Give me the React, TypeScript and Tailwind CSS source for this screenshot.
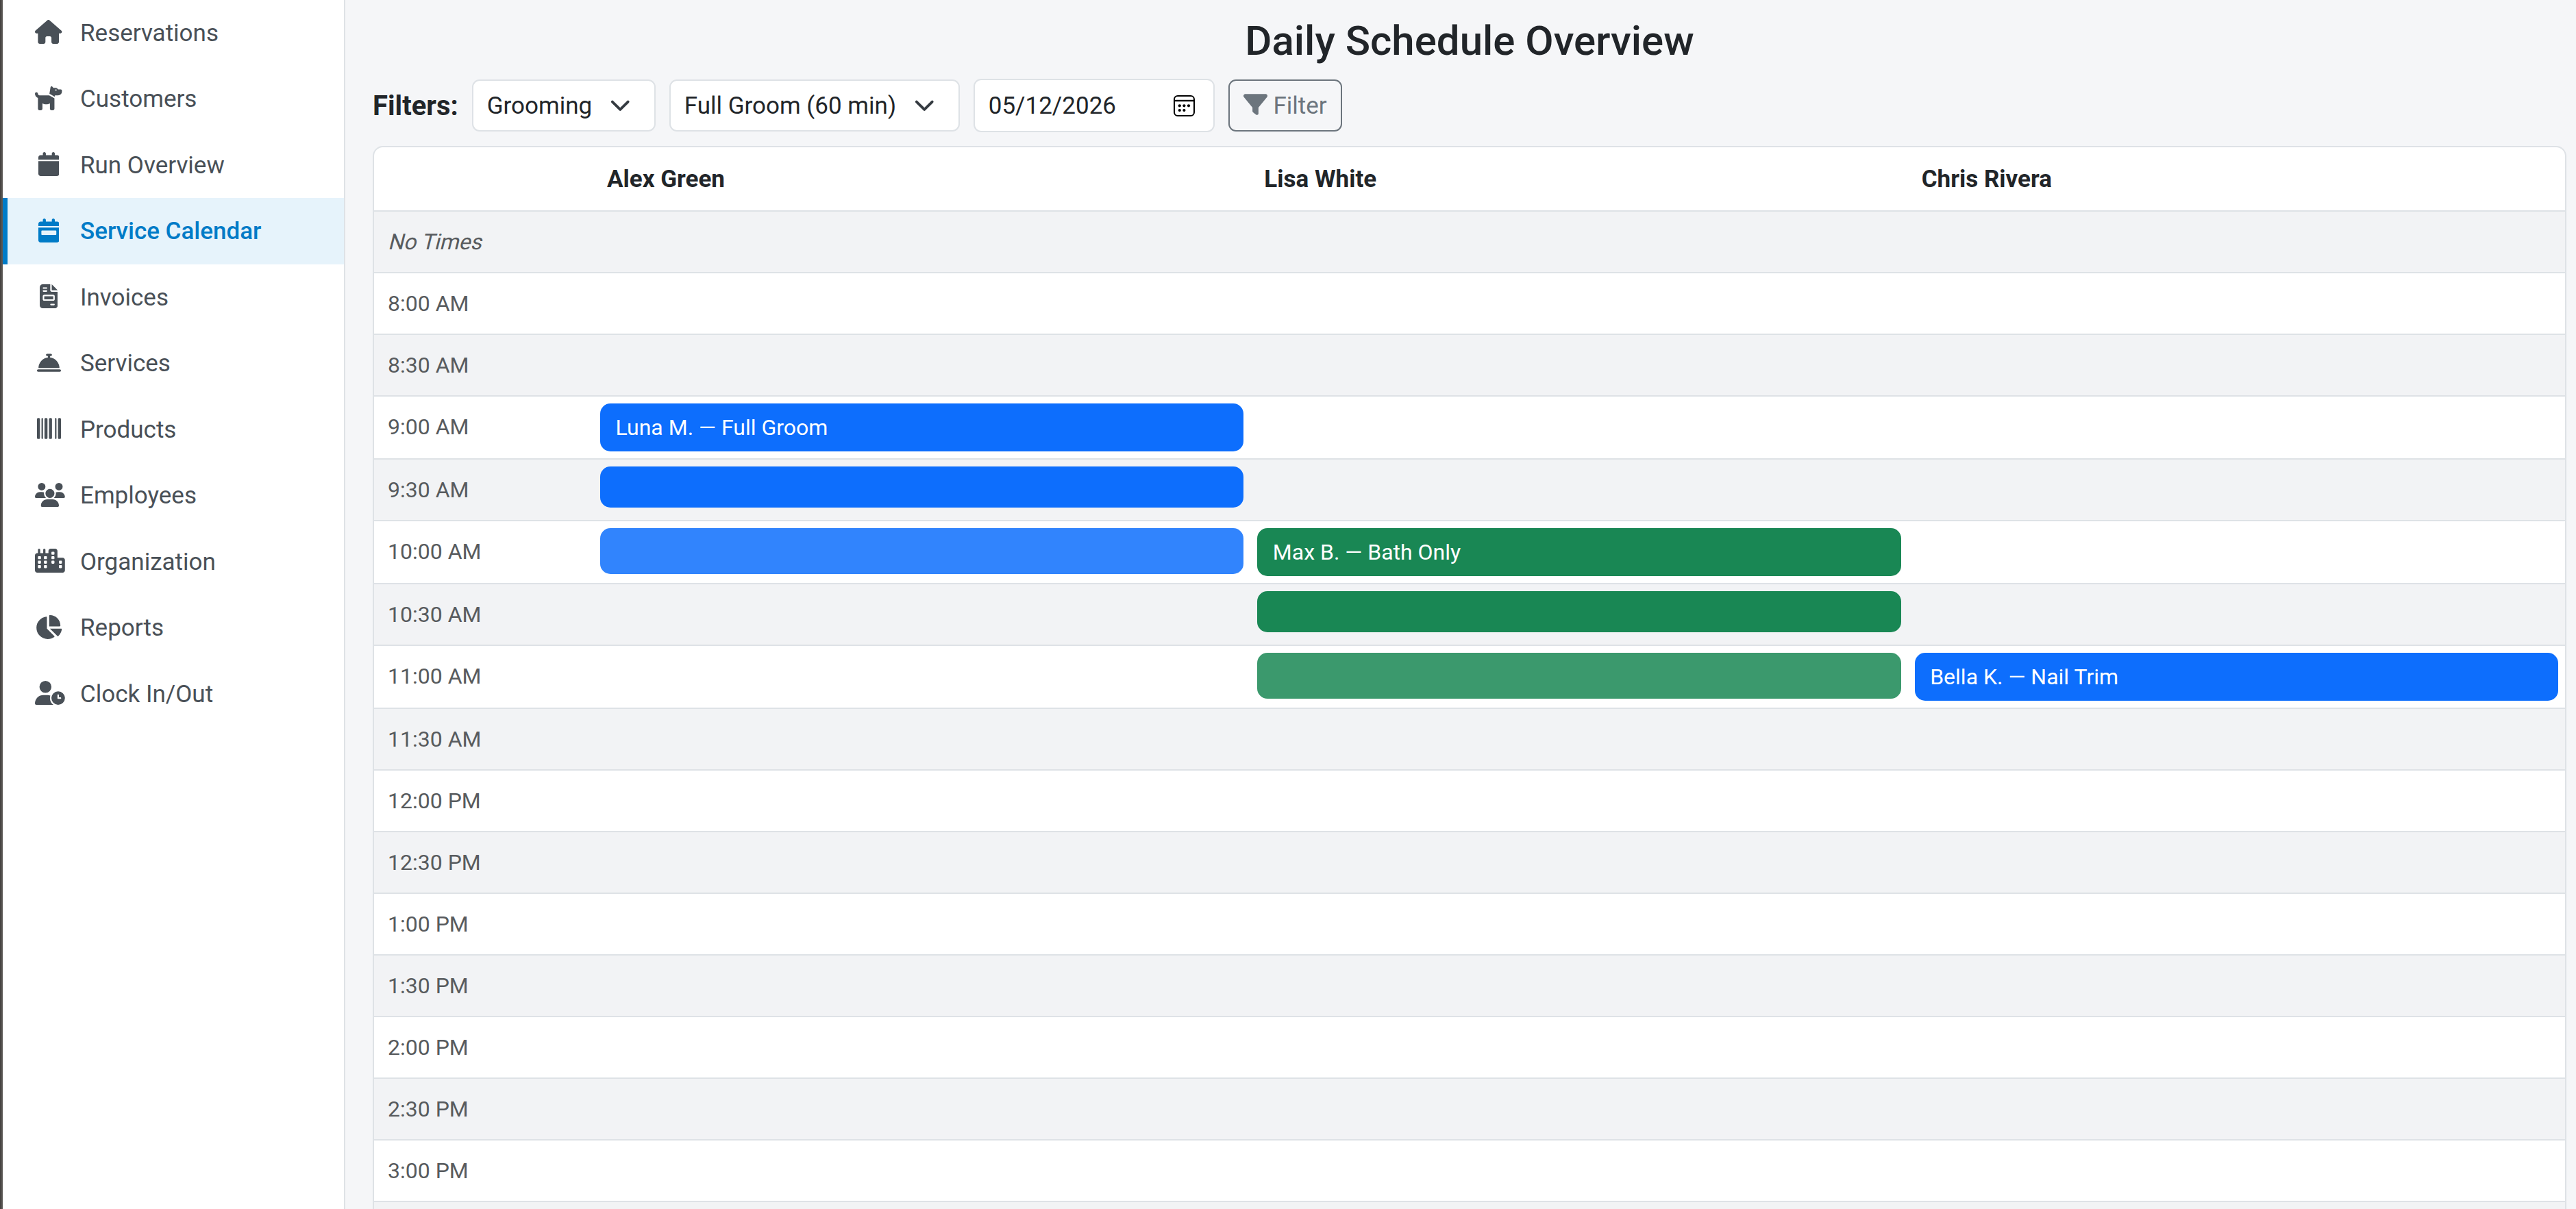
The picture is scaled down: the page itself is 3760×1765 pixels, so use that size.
import type { IconType } from 'react-icons';
import {
  FaHouse,
  FaDog,
  FaCalendar,
  FaCalendarWeek,
  FaFileInvoice,
  FaBellConcierge,
  FaBarcode,
  FaUsers,
  FaCity,
  FaChartPie,
  FaUserClock,
  FaFilter,
} from 'react-icons/fa6';

const NAV: { label: string; icon: IconType; size: string; active?: boolean }[] = [
  { label: 'Reservations', icon: FaHouse, size: 'h-[35px] w-[39.4px]' },
  { label: 'Customers', icon: FaDog, size: 'h-[35px] w-[39.4px]' },
  { label: 'Run Overview', icon: FaCalendar, size: 'h-[35px] w-[30.6px]' },
  { label: 'Service Calendar', icon: FaCalendarWeek, size: 'h-[35px] w-[30.6px]', active: true },
  { label: 'Invoices', icon: FaFileInvoice, size: 'h-[35px] w-[26.3px]' },
  { label: 'Services', icon: FaBellConcierge, size: 'size-[35px]' },
  { label: 'Products', icon: FaBarcode, size: 'size-[35px]' },
  { label: 'Employees', icon: FaUsers, size: 'h-[35px] w-[43.8px]' },
  { label: 'Organization', icon: FaCity, size: 'h-[35px] w-[43.8px]' },
  { label: 'Reports', icon: FaChartPie, size: 'h-[35px] w-[39.4px]' },
  { label: 'Clock In/Out', icon: FaUserClock, size: 'h-[35px] w-[43.8px]' },
];

const STAFF = ['Alex Green', 'Lisa White', 'Chris Rivera'];

type Slot = { className: string; text?: string };

const BLUE = 'h-[70px] bg-[#0d6efd]';
const BLUE_MID = 'h-[60px] bg-[#0d6efd]';
const BLUE_END = 'h-[67px] bg-[#0d6efd] opacity-85';
const GREEN = 'h-[70px] bg-[#198754]';
const GREEN_MID = 'h-[60px] bg-[#198754]';
const GREEN_END = 'h-[67px] bg-[#198754] opacity-85';

const ROWS: { time: string; slots?: (Slot | null)[] }[] = [
  { time: 'No Times' },
  { time: '8:00 AM' },
  { time: '8:30 AM' },
  { time: '9:00 AM', slots: [{ className: BLUE, text: 'Luna M. — Full Groom' }, null, null] },
  { time: '9:30 AM', slots: [{ className: BLUE_MID }, null, null] },
  {
    time: '10:00 AM',
    slots: [{ className: BLUE_END }, { className: GREEN, text: 'Max B. — Bath Only' }, null],
  },
  { time: '10:30 AM', slots: [null, { className: GREEN_MID }, null] },
  {
    time: '11:00 AM',
    slots: [null, { className: GREEN_END }, { className: BLUE, text: 'Bella K. — Nail Trim' }],
  },
  { time: '11:30 AM' },
  { time: '12:00 PM' },
  { time: '12:30 PM' },
  { time: '1:00 PM' },
  { time: '1:30 PM' },
  { time: '2:00 PM' },
  { time: '2:30 PM' },
  { time: '3:00 PM' },
  { time: '' },
];

function Sidebar() {
  return (
    <nav className="w-[500px] shrink-0 border-r-2 border-[#dee2e6] bg-white">
      <ul className="-mt-[0.5px]">
        {NAV.map(({ label, icon: Icon, size, active }) => (
          <li
            key={label}
            className={
              active
                ? 'flex h-[96.5px] items-center border-l-[7px] border-[#007bc7] bg-[#e6f3fb] pl-10 font-medium text-[#007bc7]'
                : 'flex h-[96.5px] items-center border-l-[7px] border-transparent pl-10 text-[#495057]'
            }
          >
            <span className="mr-[26px] flex w-10 shrink-0 pb-[2px] [justify-content:safe_center]">
              <Icon className={`shrink-0 ${size}`} />
            </span>
            <span className="pt-[2px]">{label}</span>
          </li>
        ))}
      </ul>
    </nav>
  );
}

function Select({ value, className }: { value: string; className: string }) {
  return (
    <div
      className={`flex h-[76px] items-center justify-between rounded-[11px] border-2 border-[#dee2e6] bg-white pr-[34.5px] pl-5 ${className}`}
    >
      <span className="pt-[2px]">{value}</span>
      <svg viewBox="0 0 16 16" className="size-[30.5px]" fill="none" stroke="#343a40" strokeWidth="2" strokeLinecap="round" strokeLinejoin="round">
        <path d="m2 5 6 6 6-6" />
      </svg>
    </div>
  );
}

function DateField() {
  return (
    <div className="flex h-[78px] w-[352px] items-center justify-between rounded-[11px] border-2 border-[#dee2e6] bg-white pr-[27px] pl-5">
      <span className="pt-[2px]">05/12/2026</span>
      <svg viewBox="0 0 31 31" className="size-[31px]" fill="none" stroke="#000">
        <rect x="1" y="1" width="29" height="29" rx="5" strokeWidth="2" />
        <path d="M1 8h29" strokeWidth="2.4" />
        <g fill="#000" stroke="none">
          <circle cx="8.8" cy="15.3" r="2.1" />
          <circle cx="15.4" cy="15.3" r="2.1" />
          <circle cx="22" cy="15.3" r="2.1" />
          <circle cx="8.8" cy="22" r="2.1" />
          <circle cx="15.4" cy="22" r="2.1" />
        </g>
      </svg>
    </div>
  );
}

export default function App() {
  return (
    <div className="flex h-[1765px] overflow-hidden bg-[#f5f6f8] font-[Roboto,sans-serif] text-[35px] leading-[52.5px] text-[#212529]">
      <div className="w-1 shrink-0 border-r-2 border-[#5a5754] bg-[#464341]" />
      <Sidebar />
      <main className="min-w-0 grow pt-[23px] pr-3.5 pl-10">
        <h1 className="mb-[19px] text-center text-[60px] leading-[73px] font-medium">Daily Schedule Overview</h1>
        <div className="mb-5 flex items-center gap-5">
          <span className="pt-[2px] text-[40px] font-bold">Filters:</span>
          <Select value="Grooming" className="w-[268px]" />
          <Select value="Full Groom (60 min)" className="w-[424px]" />
          <DateField />
          <button className="flex h-[76px] items-center rounded-[11px] border-2 border-[#6c757d] px-5 text-[#6c757d]">
            <FaFilter className="mr-[8.7px] mb-[3px] size-[35px]" />
            <span className="pt-[2px]">Filter</span>
          </button>
        </div>
        <section className="rounded-t-[15px] border-2 border-b-0 border-[#dee2e6] bg-white">
          <div className="grid h-[94px] grid-cols-[320px_repeat(3,1fr)] items-center border-b-2 border-[#dee2e6] font-bold">
            <span />
            {STAFF.map((name) => (
              <span key={name} className="pt-[2px] pl-5">
                {name}
              </span>
            ))}
          </div>
          {ROWS.map(({ time, slots }) => (
            <div
              key={time}
              className="grid grid-cols-[320px_repeat(3,1fr)] border-b-2 border-[#dee2e6] text-[32px] leading-[48px] odd:bg-white even:bg-[#f2f3f5]"
            >
              <div className="p-5 text-[#585b5e]">
                <span className={time === 'No Times' ? 'block w-fit origin-[0_35px] skew-x-[-14deg]' : ''}>{time}</span>
              </div>
              {slots?.map((slot, i) => (
                <div key={i} className={slot ? (slot.text ? 'p-2.5' : 'px-2.5 pt-2.5') : ''}>
                  {slot && (
                    <div className={`flex items-center rounded-[15px] px-[22.5px] text-white ${slot.className}`}>{slot.text}</div>
                  )}
                </div>
              ))}
            </div>
          ))}
        </section>
      </main>
    </div>
  );
}
